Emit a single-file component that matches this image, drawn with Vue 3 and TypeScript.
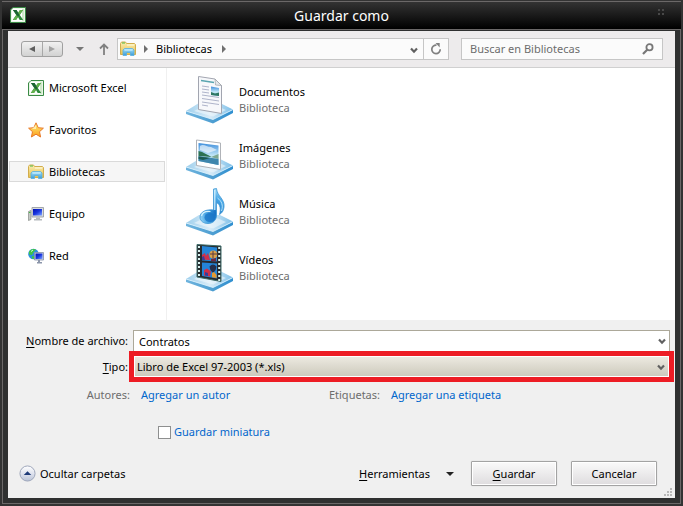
<script setup lang="ts">
import { ref } from 'vue'

type Icon = 'excel' | 'star' | 'library' | 'computer' | 'network'
interface Place { name: string; icon: Icon }
interface Library { name: string; icon: 'docs' | 'images' | 'music' | 'videos' }

const places: Place[] = [
  { name: 'Microsoft Excel', icon: 'excel' },
  { name: 'Favoritos', icon: 'star' },
  { name: 'Bibliotecas', icon: 'library' },
  { name: 'Equipo', icon: 'computer' },
  { name: 'Red', icon: 'network' },
]
const libraries: Library[] = [
  { name: 'Documentos', icon: 'docs' },
  { name: 'Imágenes', icon: 'images' },
  { name: 'Música', icon: 'music' },
  { name: 'Vídeos', icon: 'videos' },
]
const selected = ref('Bibliotecas')
const fileName = ref('Contratos')
const fileType = ref('xls')
const query = ref('')
const thumbnail = ref(false)
</script>

<template>
  <div class="window">
    <svg class="defs" width="0" height="0" aria-hidden="true">
      <defs>
        <linearGradient id="gFolder" x1="0" y1="0" x2="0" y2="1"><stop offset="0" stop-color="#fbeeb0" /><stop offset="1" stop-color="#e5bf50" /></linearGradient>
        <linearGradient id="gBlue" x1="0" y1="0" x2="0" y2="1"><stop offset="0" stop-color="#a5e2fa" /><stop offset="1" stop-color="#3a9bd8" /></linearGradient>
        <linearGradient id="gStar" x1="0" y1="0" x2="0" y2="1"><stop offset="0" stop-color="#fff27a" /><stop offset="1" stop-color="#fb9d1c" /></linearGradient>
        <linearGradient id="gScreen" x1="0" y1="0" x2="1" y2="1"><stop offset="0" stop-color="#0010b0" /><stop offset=".5" stop-color="#1a36e0" /><stop offset="1" stop-color="#7fa6ff" /></linearGradient>
        <linearGradient id="gBase" x1="0" y1="0" x2="1" y2="0"><stop offset="0" stop-color="#9fcfec" /><stop offset=".5" stop-color="#d9ecf8" /><stop offset="1" stop-color="#7dbfe8" /></linearGradient>
        <linearGradient id="gEdge" x1="0" y1="0" x2="1" y2="0"><stop offset="0" stop-color="#6fb4de" /><stop offset=".55" stop-color="#4f9fd2" /><stop offset="1" stop-color="#2f8fd0" /></linearGradient>
        <linearGradient id="gSky" x1="0" y1="0" x2="0" y2="1"><stop offset="0" stop-color="#3f8edc" /><stop offset=".6" stop-color="#c9ebf8" /><stop offset="1" stop-color="#5ba3d0" /></linearGradient>
        <radialGradient id="gNote" cx=".65" cy=".7" r=".7"><stop offset="0" stop-color="#1670c4" /><stop offset=".6" stop-color="#4aa8e6" /><stop offset="1" stop-color="#a4dcf8" /></radialGradient>
        <linearGradient id="gRound" x1="0" y1="0" x2="0" y2="1"><stop offset="0" stop-color="#ffffff" /><stop offset=".5" stop-color="#dfe3ee" /><stop offset="1" stop-color="#b9c2d6" /></linearGradient>
        <symbol id="i-excel" viewBox="0 0 16 16">
          <path d="M3 .5h12.500v15H.5V3z" fill="#e9f5e6" stroke="#3a8a45" />
          <path d="M2 3.500 3.500 2H14v12H2z" fill="#fff" />
          <path d="M12 2h2v12h-2z" fill="#cfe8ca" />
          <path d="M3 3h3.500l1.700 3L10 3h3L9.800 8l3.400 5H9.700L8 10l-2 3H2.800l3.400-5z" fill="#2f8a3c" />
          <path d="M10 3h3L6 13H2.800z" fill="#63b14c" />
          <path d="M3 3h3.500l3 5-1.500 2z" fill="#1d6534" />
        </symbol>
        <symbol id="i-star" viewBox="0 0 16 16">
          <path d="M8 .8 10.200 5.700 15.400 6.200 11.500 9.700 12.600 15 8 12.200 3.400 15 4.500 9.700.6 6.200 5.800 5.700z" fill="url(#gStar)" stroke="#e87a2a" stroke-linejoin="round" />
          <path d="M8 3v4L4 7z" fill="#fffbd0" opacity=".7" />
        </symbol>
        <symbol id="i-library" viewBox="0 0 16 16">
          <path d="M.5 2.500 1.500 1h4l1 1.500h8l1 1V13.500H.5z" fill="url(#gFolder)" stroke="#d2ad4c" />
          <path d="M2 2h3" stroke="#4cb944" /><path d="M7 4h7" stroke="#fffbe2" />
          <path d="M3 14.500V9l1.500-1.500h8L14 9v5.500h-3.500V11.500h-4v3z" fill="url(#gBlue)" stroke="#58aede" stroke-width=".8" stroke-linejoin="round" />
          <path d="M4.500 9h8" stroke="#d8f5ff" />
        </symbol>
        <symbol id="i-computer" viewBox="0 0 16 16">
          <path d="M.5 5.500 3 4.500v9L.5 14.500z" fill="#c5c9c5" stroke="#858a85" stroke-width=".7" /><path d="M1 6.500h1.500" stroke="#3dc43c" />
          <path d="M4 1.500h11.500v9.500H4z" fill="#d8dbde" stroke="#a3a7ab" />
          <path d="M5 3h9v6.500H5z" fill="url(#gScreen)" />
          <path d="M8 11.500h4v1.500h2v1.500H6V13h2z" fill="#b6babd" />
        </symbol>
        <symbol id="i-network" viewBox="0 0 16 16">
          <circle cx="5.500" cy="6" r="5.300" fill="#2b8fe0" />
          <path d="M1 4C2 1 6 .3 8 1.500L5.500 4 4 7 1 6.500zM4 8l3 .5-1 2.500-2-.5z" fill="#3fc544" />
          <path d="M3 3.500 5 2" stroke="#caffe2" />
          <path d="M6.500 4.500h9v7.500h-9z" fill="#d0d5e2" stroke="#8590a8" stroke-width=".8" />
          <path d="M7.500 5.500h7v5.500h-7z" fill="url(#gScreen)" />
          <path d="M10 12h2v2h2v1.500H9V14h1z" fill="#8c96aa" />
        </symbol>
        <symbol id="base" viewBox="0 0 48 48">
          <path d="M0 35 27 43 47 33.500v3.500L27 47.500 0 38z" fill="url(#gEdge)" />
          <path d="M0 35 13 27 34 27 47 33.500 27 43.500z" fill="url(#gBase)" />
          <path d="M8 35 17 30.500 32 30.500 40 34 27 40.500z" fill="#eef6fb" opacity=".6" />
          <path d="M0 35 27 43.500 47 33.500" fill="none" stroke="#d8effc" stroke-width=".9" />
        </symbol>
        <symbol id="i-docs" viewBox="0 0 48 48">
          <use href="#base" />
          <path d="M12.500 0.500 29 3 35.500 9.500V37.500L12.500 33.500z" fill="#f7f8fb" stroke="#a2a5b0" />
          <path d="M29 3l.5 6 6 .5z" fill="#e2e6ea" stroke="#9ca0a6" stroke-width=".7" />
          <path d="M15 4.500 28 6.500" stroke="#5aa5b0" stroke-width="1.600" />
          <path d="M16 10 23 11M16 13 23 14M16 16 23 17M16 19 33 21.500M16 22.500 33 25M16 26 33 28.500M16 29 22 30" stroke="#a5abc4" stroke-width=".9" />
          <path d="M25 10.500 33 12v8l-8-1z" fill="url(#gSky)" /><path d="M25 16l4 1.500 4-1v3.500l-8-1z" fill="#2e7863" />
        </symbol>
        <symbol id="i-images" viewBox="0 0 48 48">
          <use href="#base" />
          <path d="M10.500 8 34.500 11V37.500L10.500 33.500z" fill="#fff" stroke="#b0b3b8" />
          <path d="M12.500 11 32.500 13.500V33L12.500 29z" fill="url(#gSky)" />
          <path d="M14 14c4-3 6 1 11 1l6 3-9 3-8-3z" fill="#fff" opacity=".6" />
          <path d="M12.500 19c5 1 9 4 13 6l-13-1z" fill="#2d7150" />
          <path d="M25 25 32.500 22v5z" fill="#7fa890" />
          <path d="M12.500 24 32.500 27v6L12.500 29z" fill="#3f86ac" />
          <path d="M12.500 24.500 24 26l-7 2-4.500-1z" fill="#1d5a50" />
        </symbol>
        <symbol id="i-music" viewBox="0 0 48 48">
          <use href="#base" />
          <path d="M27.500 1 30.500.5C31 8 39 11 38 19c-.5 4-2 6-4.500 7.500 1.500-5 1-10-3-12V28c-.5 5-4.500 7.500-8.500 7.500-4.500 0-8-2.500-8-6.500 0-5 6-8 13.500-7z" fill="url(#gNote)" stroke="#3d97d4" stroke-width=".8" />
          <ellipse cx="24" cy="29.500" rx="5.500" ry="4.500" fill="#1a74c6" opacity=".75" />
          <path d="M28.800 2v20M15.500 28c1-4 5-5 9-4.500" fill="none" stroke="#d5f2ff" stroke-width="1.200" />
          <path d="M31.500 10c4 3 6 7 4 13" fill="none" stroke="#b8e6fc" />
        </symbol>
        <symbol id="i-videos" viewBox="0 0 48 48">
          <use href="#base" />
          <path d="M11 .5 35 2V37.500L11 33z" fill="#272b2f" stroke="#3f6d6a" />
          <path d="M16 2 31 3.500V17.500L16 16.500zM16 18.500 31 19.500V34.500L16 32z" fill="#2485d8" />
          <path d="M13 2v31M33.200 3v34" stroke="#d8f1ef" stroke-width="2" stroke-dasharray="2 2" />
          <path d="M16 11l3-2 1 3 2-3 2 7-8-.5zM18 26l3-1.500 4 3-1 5-6-1z" fill="#d0304a" />
          <path d="M16 13l2-1 1 4h-3zM19 28l3 1v3l-3-.5z" fill="#3a3d9a" />
          <circle cx="27.300" cy="10.500" r="3.900" fill="#dba24a" /><path d="M27 7v7M24 10h7" stroke="#5b3a40" />
          <path d="M25 15l5-1v3.400l-5-.4z" fill="#6b2b46" />
          <path d="M23.500 22.500q3.500-4 7 0 0 3-3 6h-1q-3-3-3-6z" fill="#25304d" /><path d="M26 29l2-1 2.500 3v3l-4.500-.7z" fill="#e89a30" />
        </symbol>
        <symbol id="i-chevron" viewBox="0 0 8 7"><path d="M1 1.500 4 4.700 7 1.500" fill="none" stroke="currentColor" stroke-width="2.200" /></symbol>
        <symbol id="i-right" viewBox="0 0 4 8"><path d="M0 0 4 4 0 8z" fill="currentColor" /></symbol>
      </defs>
    </svg>

    <header class="title">
      <svg class="ico app"><use href="#i-excel" /></svg>
      <h1>Guardar como</h1>
      <svg class="grip" viewBox="0 0 8 8"><path d="M1 1h2v2H1zM5 1h2v2H5zM1 5h2v2H1zM5 5h2v2H5z" fill="#484848" /></svg>
    </header>

    <main class="dialog">
      <nav class="toolbar">
        <div class="history">
          <button aria-label="Atrás"><svg class="tri" viewBox="0 0 6 6"><path d="M6 0v6L0 3z" fill="#5e5e5e" /></svg></button>
          <button aria-label="Adelante"><svg class="tri" viewBox="0 0 6 6"><path d="M0 0v6l6-3z" fill="#a3a3a3" /></svg></button>
        </div>
        <button class="recent" aria-label="Ubicaciones recientes"><svg viewBox="0 0 8 4"><path d="M0 0h8L4 4z" fill="#777" /></svg></button>
        <button class="up" aria-label="Subir"><svg viewBox="0 0 10 12"><path d="M5 12V2M1 5.500 5 1.500l4 4" fill="none" stroke="#808080" stroke-width="1.800" /></svg></button>
        <div class="address">
          <svg class="ico"><use href="#i-library" /></svg>
          <svg class="right"><use href="#i-right" /></svg>
          <a href="#">Bibliotecas</a>
          <svg class="right"><use href="#i-right" /></svg>
          <button class="drop" aria-label="Ubicaciones anteriores"><svg class="chev"><use href="#i-chevron" /></svg></button>
          <button class="refresh" aria-label="Actualizar">
            <svg viewBox="0 0 12 12"><path d="M6.500 2.200A4.200 4.200 0 1 0 10.200 6.200" fill="none" stroke="#808080" stroke-width="1.700" /><path d="M5.500 0 9.700 0V4.500z" fill="#808080" /></svg>
          </button>
        </div>
        <div class="search">
          <input v-model="query" type="search" placeholder="Buscar en Bibliotecas" aria-label="Buscar en Bibliotecas" />
          <svg viewBox="0 0 12 12"><circle cx="7.500" cy="4.300" r="3.100" fill="none" stroke="#777" stroke-width="1.800" /><path d="M5.200 6.700 1 11" stroke="#777" stroke-width="2.200" /></svg>
        </div>
      </nav>

      <section class="browser">
        <aside class="places">
          <button v-for="p in places" :key="p.name" :class="{ active: p.name === selected }" @click="selected = p.name">
            <svg class="ico"><use :href="'#i-' + p.icon" /></svg>{{ p.name }}
          </button>
        </aside>
        <ul class="libraries">
          <li v-for="l in libraries" :key="l.name">
            <svg><use :href="'#i-' + l.icon" /></svg>
            <div><strong>{{ l.name }}</strong><span>Biblioteca</span></div>
          </li>
        </ul>
      </section>

      <form class="form" @submit.prevent>
        <div class="row">
          <label for="file-name"><u>N</u>ombre de archivo:</label>
          <div class="field name">
            <input id="file-name" v-model="fileName" type="text" />
            <svg class="chev"><use href="#i-chevron" /></svg>
          </div>
        </div>
        <div class="row">
          <label for="file-type"><u>T</u>ipo:</label>
          <div class="field kind">
            <select id="file-type" v-model="fileType"><option value="xls">Libro de Excel 97-2003 (*.xls)</option></select>
            <svg class="chev"><use href="#i-chevron" /></svg>
          </div>
        </div>
        <div class="meta">
          <span>Autores:</span><a href="#">Agregar un autor</a>
          <span>Etiquetas:</span><a href="#">Agregar una etiqueta</a>
        </div>
        <label class="thumb"><input v-model="thumbnail" type="checkbox" />Guardar miniatura</label>
        <footer class="actions">
          <button type="button" class="plain">
            <svg class="round" viewBox="0 0 18 18"><circle cx="9" cy="9" r="8" fill="url(#gRound)" stroke="#9aa3b8" /><path d="M5 10.500 9 6.500l4 4z" fill="#1d3a78" /></svg>Ocultar carpetas
          </button>
          <button type="button" class="plain tools"><span><u>H</u>erramientas</span><svg viewBox="0 0 8 4"><path d="M0 0h8L4 4z" fill="#222" /></svg></button>
          <button type="submit" class="push"><span><u>G</u>uardar</span></button>
          <button type="button" class="push">Cancelar</button>
        </footer>
        <svg class="resize" viewBox="0 0 8 8"><path d="M6 0h2v2H6zM3 3h2v2H3zM6 3h2v2H6zM0 6h2v2H0zM3 6h2v2H3zM6 6h2v2H6z" fill="#b9b9b9" /></svg>
      </form>
    </main>
  </div>
</template>

<style>
body { margin: 0; }
</style>

<style scoped>
* { box-sizing: border-box; }
.window {
  display: flex;
  flex-direction: column;
  min-height: 100vh;
  padding: 1px 2px 2px;
  background: #333;
  color: #000;
  font: 11px/16px "Noto Sans", "Open Sans", sans-serif;
}
.defs { position: absolute; }
svg { display: block; flex: none; }
button { padding: 0; border: 0; background: none; color: inherit; font: inherit; }
input, select { margin: 0; font: inherit; color: inherit; }
a { color: #0066cc; text-decoration: none; }
u { text-underline-offset: 2px; }
.ico { width: 16px; height: 16px; }
.chev { width: 8px; height: 7px; color: #606060; }

.title {
  display: flex;
  align-items: center;
  height: 29px;
  padding: 0 16px 0 8px;
  border-top: 1px solid #6b6868;
  border-bottom: 1px solid #6b6868;
  background: linear-gradient(#333, #000);
}
.title h1 { flex: 1; margin: 0; text-align: center; color: #fff; font-size: 14px; font-weight: 400; }
.grip { width: 8px; height: 8px; margin-bottom: 8px; }
.title .app { margin-bottom: 2px; }

.dialog {
  display: flex;
  flex: 1;
  flex-direction: column;
  padding: 1px 5px 5px;
  border: 1px solid #6b6868;
  border-top: 0;
  background: #2f3030;
}
.toolbar {
  display: flex;
  align-items: center;
  height: 37px;
  padding: 0 12px 0 13px;
  border-bottom: 1px solid #d0d0d0;
  background: #edebec;
}
.history { display: flex; width: 42px; height: 16px; border: 1px solid #a0a0a0; border-radius: 3px; background: linear-gradient(#f1f1f1, #d2d2d2); }
.history button { display: flex; flex: 1; align-items: center; justify-content: center; }
.history button + button { border-left: 1px solid #a8a8a8; }
.tri { width: 6px; height: 6px; }
.recent { margin-left: 13px; }
.recent svg { width: 8px; height: 4px; }
.up { margin-left: 15px; }
.up svg { width: 10px; height: 12px; }
.address {
  display: flex;
  flex: 1;
  align-items: center;
  gap: 8px;
  height: 22px;
  margin-left: 8px;
  border: 1px solid #c6c6c6;
  background: #fbfbfb;
}
.address .ico { margin-left: 2px; }
.address a { margin-right: 2px; color: #000; }
.right { width: 4px; height: 8px; color: #707070; }
.drop { margin: 2px 1px 0 auto; }
.refresh { display: flex; align-items: center; justify-content: center; align-self: stretch; width: 25px; margin-left: -4px; border-left: 1px solid #c6c6c6; }
.refresh svg { width: 12px; height: 12px; }
.search { display: flex; align-items: center; width: 202px; height: 22px; margin-left: 12px; padding: 0 8px; border: 1px solid #c6c6c6; background: #fbfbfb; }
.search input { flex: 1; min-width: 0; padding: 0; border: 0; background: none; outline: 0; appearance: none; }
.search input::placeholder { color: #6d6d6d; opacity: 1; }
.search svg { width: 12px; height: 12px; }

.browser { display: flex; flex: 1; background: #fff; }
.places { display: flex; flex-direction: column; gap: 21px; width: 159px; padding: 9px 1px; border-right: 1px solid #f0f0f0; }
.places button { display: flex; align-items: center; gap: 5px; height: 21px; padding-left: 18px; border: 1px solid transparent; text-align: left; }
.places .active { border-color: #dadada; background: #f6f6f6; }
.libraries { display: flex; flex-direction: column; gap: 8px; margin: 0; padding: 8px 19px; list-style: none; }
.libraries li { display: flex; align-items: center; gap: 5px; height: 48px; }
.libraries svg { width: 48px; height: 48px; }
.libraries strong, .libraries span { display: block; font-weight: 400; }
.libraries span { color: #6d6d6d; }

.form { position: relative; display: flex; flex-direction: column; height: 178px; padding-top: 10px; background: #f0f0f0; }
.row { display: flex; align-items: center; padding-right: 1px; }
.row label { width: 121px; padding-right: 1px; text-align: right; }
.field { position: relative; flex: 1; }
.field .chev { position: absolute; right: 4px; top: 8px; pointer-events: none; }
.name { margin: 0 4px; }
.name input { display: block; width: 100%; height: 21px; padding: 0 5px; border: 1px solid #aca899; border-bottom: 0; background: #fff; outline: 0; }
.kind { border: 5px solid #ed1c24; }
.kind select { display: block; width: 100%; height: 21px; padding: 0 2px; border: 1px solid #fff; border-radius: 0; background: linear-gradient(#ece9e0, #cdcabd); appearance: none; outline: 0; }
.meta { display: grid; grid-template-columns: 122px 188px 62px 1fr; align-items: center; height: 26px; }
.meta span { color: #6d6d6d; text-align: right; }
.meta a { padding-left: 11px; }
.thumb { display: flex; align-items: center; gap: 3px; height: 20px; margin: 14px 0 0 150px; color: #0066cc; }
.thumb input { width: 13px; height: 13px; border: 1px solid #8e8f8f; background: #fff; appearance: none; }
.thumb input:checked { background: #0066cc; }
.actions { display: flex; align-items: center; margin-top: auto; padding: 0 18px 12px 11px; }
.plain { display: flex; align-items: center; gap: 4px; }
.round { width: 17px; height: 17px; }
.tools { gap: 16px; margin: 0 17px 0 auto; }
.tools svg { width: 8px; height: 4px; }
.push { width: 86px; height: 25px; border: 1px solid #a3a3a3; border-radius: 1px; background: linear-gradient(#fafafa, #dedcde); box-shadow: inset 0 0 0 1px #fff, 0 0 1px #bbb; }
.push + .push { margin-left: 14px; }
.resize { position: absolute; right: 3px; bottom: 2px; width: 8px; height: 8px; }
</style>
